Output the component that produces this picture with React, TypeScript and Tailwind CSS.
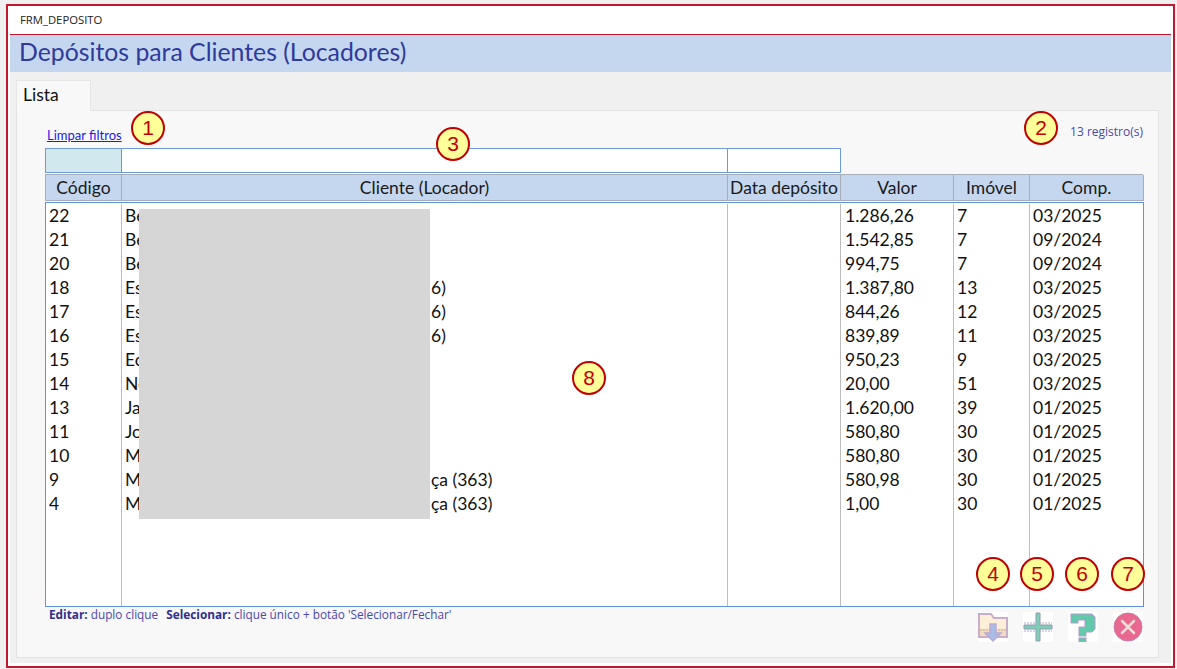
const COLS = "grid grid-cols-[76px_606px_113px_113px_76px_115px]";

type Row = { id: string; name: string; tail?: string; valor: string; imovel: string; comp: string };

const ROWS: Row[] = [
  { id: "22", name: "Be", valor: "1.286,26", imovel: "7", comp: "03/2025" },
  { id: "21", name: "Be", valor: "1.542,85", imovel: "7", comp: "09/2024" },
  { id: "20", name: "Be", valor: "994,75", imovel: "7", comp: "09/2024" },
  { id: "18", name: "Es", tail: "6)", valor: "1.387,80", imovel: "13", comp: "03/2025" },
  { id: "17", name: "Es", tail: "6)", valor: "844,26", imovel: "12", comp: "03/2025" },
  { id: "16", name: "Es", tail: "6)", valor: "839,89", imovel: "11", comp: "03/2025" },
  { id: "15", name: "Ec", valor: "950,23", imovel: "9", comp: "03/2025" },
  { id: "14", name: "Ne", valor: "20,00", imovel: "51", comp: "03/2025" },
  { id: "13", name: "Ja", valor: "1.620,00", imovel: "39", comp: "01/2025" },
  { id: "11", name: "Jo", valor: "580,80", imovel: "30", comp: "01/2025" },
  { id: "10", name: "M", valor: "580,80", imovel: "30", comp: "01/2025" },
  { id: "9", name: "M", tail: "ça (363)", valor: "580,98", imovel: "30", comp: "01/2025" },
  { id: "4", name: "M", tail: "ça (363)", valor: "1,00", imovel: "30", comp: "01/2025" },
];

const HEADERS = ["Código", "Cliente (Locador)", "Data depósito", "Valor", "Imóvel", "Comp."];

// callouts sit over the form, so these keep fixed coordinates
const BADGES = [
  { n: "1", pos: "left-[131px] top-[111px]" },
  { n: "2", pos: "left-[1024px] top-[111px]" },
  { n: "3", pos: "left-[436px] top-[127px]" },
  { n: "4", pos: "left-[976px] top-[557px]" },
  { n: "5", pos: "left-[1020px] top-[557px]" },
  { n: "6", pos: "left-[1065px] top-[557px]" },
  { n: "7", pos: "left-[1111px] top-[557px]" },
  { n: "8", pos: "left-[572px] top-[361px]" },
];

function FolderIcon() {
  return (
    <svg width="30" height="30" viewBox="0 0 30 30" className="bg-white blur-[0.4px]">
      <path d="M1 2h12l3 4h13v19H1z" fill="#fdeed8" stroke="#c9aec9" strokeWidth="2" />
      <rect x="2" y="17" width="26" height="7" fill="#f2dcc0" />
      <path d="M2 18h26" stroke="#c9a98c" strokeWidth="1" strokeDasharray="2 1" />
      <path d="M12 12h6v9h5l-8 8-8-8h5z" fill="#a9bce6" stroke="#b9a9d4" strokeWidth="1.5" />
    </svg>
  );
}

function PlusIcon() {
  return (
    <svg width="30" height="30" viewBox="0 0 30 30" className="bg-white blur-[0.4px]">
      <path d="M1 11h28" stroke="#d4c4e0" strokeWidth="1.5" strokeDasharray="2 1" />
      <path d="M1 19h28" stroke="#d4c4e0" strokeWidth="1.5" strokeDasharray="2 1" />
      <path d="M13 1h4v12h12v4H17v12h-4V17H1v-4h12z" fill="#7fcfb6" stroke="#8f9ab0" strokeWidth="1" />
    </svg>
  );
}

function HelpIcon() {
  return (
    <svg width="30" height="30" viewBox="0 0 30 30" className="bg-white blur-[0.4px]">
      <path
        d="M3 2h21l3 3v12l-3 3h-6v4h-7v-9h6V8h-7v3H3z"
        fill="#63c9ab"
        stroke="#b49ad0"
        strokeWidth="1"
      />
      <rect x="11" y="26" width="7" height="3.5" fill="#63c9ab" stroke="#b49ad0" strokeWidth="1" />
    </svg>
  );
}

function CloseIcon() {
  return (
    <svg width="30" height="30" viewBox="0 0 30 30" className="bg-white blur-[0.4px]">
      <circle cx="15" cy="15" r="14" fill="#e8688f" stroke="#c97aa8" strokeWidth="1" />
      <path d="M9 9l12 12M21 9L9 21" stroke="#f3dcd8" strokeWidth="2.5" strokeLinecap="round" />
    </svg>
  );
}

export default function App() {
  return (
    <div className="relative h-[669px] w-[1177px] overflow-hidden bg-[#f0f0f0] pb-px pl-[6px] pr-[2px] pt-[4px] font-['Lato',sans-serif] text-[#111]">
      <div className="flex h-full flex-col border-2 border-[#c0182f] bg-white">
        <div className="flex h-[28px] items-center pl-[12px] font-['Open_Sans',sans-serif] text-[11.3px] text-[#222]">
          FRM_DEPOSITO
        </div>
        <div className="mx-[2px] h-[1px] bg-[#c0182f]" />
        <div className="mx-[2px] flex h-[37px] items-center bg-[#c5d7ef] pb-[3px] pl-[9px] text-[24.8px] text-[#2f3a9c]">
          Depósitos para Clientes (Locadores)
        </div>

        <div className="mx-[2px] mb-[3px] flex flex-1 flex-col bg-[#f0f0f0] pb-[5px] pl-[6px] pr-[12px] pt-[8px]">
          <div className="relative z-10 -mb-px flex h-[31px] w-[75px] items-center border border-b-0 border-[#e6e6e6] bg-[#f8f8f8] pb-[1px] pl-[6px] text-[17.5px]">
            Lista
          </div>
          <div className="flex flex-1 flex-col border border-[#e3e3e3] bg-[#f8f8f8] pl-[28px] pr-[15px]">
            <div className="flex h-[37px] items-end justify-between pb-[6px]">
              <a className="pl-[2px] text-[13px] leading-[14px] text-[#1a1aee] underline">Limpar filtros</a>
              <span className="pb-[3px] font-['Open_Sans',sans-serif] text-[12px] leading-[14px] text-[#4a48ad]">
                13 registro(s)
              </span>
            </div>

            <div className="grid h-[25px] w-[796px] grid-cols-[77px_606px_113px]">
              <div className="border border-[#6d9bd8] bg-[#d0e8ee]" />
              <div className="border border-l-0 border-[#6d9bd8] bg-white" />
              <div className="border border-l-0 border-[#6d9bd8] bg-white" />
            </div>

            <div className="mt-px grid h-[27px] grid-cols-[76px_606px_113px_113px_76px_114px] border-y border-l border-[#a9afb8] bg-[#c5d7ef] text-[17.5px] text-[#1a1a1a]">
              {HEADERS.map((h) => (
                <div key={h} className="flex items-center justify-center whitespace-nowrap border-r border-[#a9afb8]">
                  {h}
                </div>
              ))}
            </div>

            <div className="mt-px flex h-[405px] w-[1099px] flex-col border border-[#5f94d8] bg-white text-[17.5px]">
              {ROWS.map((r, i) => (
                <div key={r.id} className={`${COLS} ${i === 0 ? "h-[25px] pt-px" : "h-[24px]"} leading-[24px]`}>
                  <div className="border-r border-[#bdbdbd] pl-[3px]">{r.id}</div>
                  <div className="flex border-r border-[#bdbdbd] pl-[3px]">
                    <span className="w-[306px]">{r.name}</span>
                    {r.tail && <span>{r.tail}</span>}
                  </div>
                  <div className="border-r border-[#bdbdbd]" />
                  <div className="border-r border-[#bdbdbd] pl-[4px]">{r.valor}</div>
                  <div className="border-r border-[#bdbdbd] pl-[3px]">{r.imovel}</div>
                  <div className="pl-[3px]">{r.comp}</div>
                </div>
              ))}
              <div className={`${COLS} flex-1`}>
                <div className="border-r border-[#bdbdbd]" />
                <div className="border-r border-[#bdbdbd]" />
                <div className="border-r border-[#bdbdbd]" />
                <div className="border-r border-[#bdbdbd]" />
                <div className="border-r border-[#bdbdbd]" />
                <div />
              </div>
            </div>

            <div className="flex w-[1099px] justify-between">
              <div className="flex gap-[8px] pl-[4px] font-['Open_Sans',sans-serif] text-[11.8px] leading-[14px] text-[#4a48ad]">
                <span><b className="text-[#2f2f8f]">Editar:</b> duplo clique</span>
                <span><b className="text-[#2f2f8f]">Selecionar:</b> clique único + botão 'Selecionar/Fechar'</span>
              </div>
              <div className="flex gap-[15px] pr-px pt-[5px]">
                <FolderIcon />
                <PlusIcon />
                <HelpIcon />
                <CloseIcon />
              </div>
            </div>
          </div>
        </div>
      </div>

      {/* redaction block over the client names */}
      <div className="absolute left-[139px] top-[209px] h-[310px] w-[291px] bg-[#d6d6d6]" />

      {BADGES.map((b) => (
        <div
          key={b.n}
          className={`absolute ${b.pos} flex h-[34px] w-[34px] items-center justify-center rounded-full border-2 border-[#c00000] bg-[#ffff99] font-['Liberation_Sans',sans-serif] text-[21px] text-[#c00000]`}
        >
          {b.n}
        </div>
      ))}
    </div>
  );
}
